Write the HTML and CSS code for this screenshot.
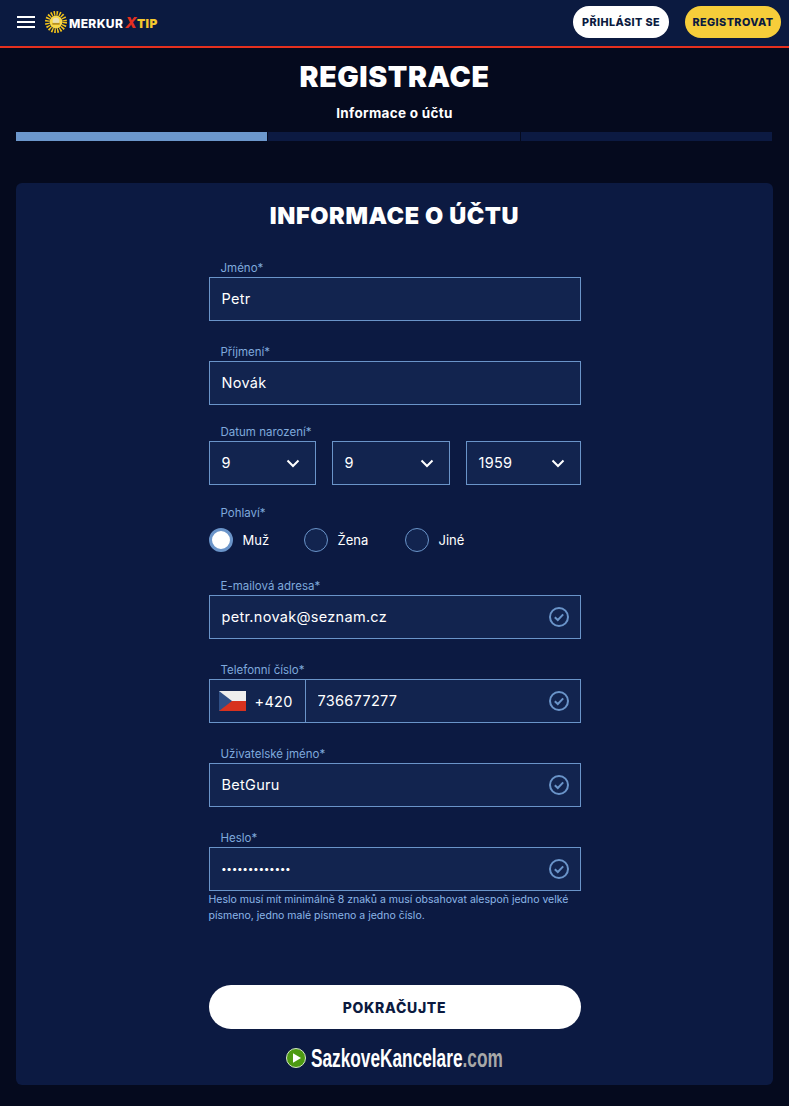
FILE: index.html
```html
<!DOCTYPE html>
<html lang="cs">
<head>
  <meta charset="UTF-8" />
  <meta name="viewport" content="width=device-width, initial-scale=1.0"/>
  <title>Registrace</title>
  <link rel="stylesheet" href="styles.css">
</head>
<body>
  <header class="topbar">
    <div class="burger"><span></span><span></span><span></span></div>
    <svg class="sun" viewBox="0 0 24 24" width="22" height="22">
      <circle cx="12" cy="12" r="9.5" fill="none" stroke="#f5c518" stroke-width="5" stroke-dasharray="1.6 1.4"/>
      <circle cx="12" cy="12" r="7" fill="#f7d84a"/>
      <circle cx="12" cy="11" r="3.6" fill="#e9dfb0"/>
      <rect x="8" y="13" width="8" height="2" fill="#b98f1e"/>
    </svg>
    <div class="brand">MERKUR<em>X</em><b>TIP</b></div>
    <div class="topbar-btns">
      <a class="top-btn white">PŘIHLÁSIT SE</a>
      <a class="top-btn yellow">REGISTROVAT</a>
    </div>
  </header>

  <h1>REGISTRACE</h1>
  <div class="step-name">Informace o účtu</div>
  <div class="progress">
    <div class="seg active"></div>
    <div class="seg"></div>
    <div class="seg"></div>
  </div>

  <main class="card">
    <h2>INFORMACE O ÚČTU</h2>
    <form class="form">
      <div class="group">
        <label>Jméno*</label>
        <div class="field"><input type="text" value="Petr"></div>
      </div>
      <div class="group second">
        <label>Příjmení*</label>
        <div class="field"><input type="text" value="Novák"></div>
      </div>
      <div class="group birth">
        <label>Datum narození*</label>
        <div class="date-row">
          <div class="field select day"><span>9</span><svg class="chevron" viewBox="0 0 14 9" width="14" height="9"><path d="M1.5 1.5 7 7l5.5-5.5" fill="none" stroke="#fff" stroke-width="2"/></svg></div>
          <div class="field select month"><span>9</span><svg class="chevron" viewBox="0 0 14 9" width="14" height="9"><path d="M1.5 1.5 7 7l5.5-5.5" fill="none" stroke="#fff" stroke-width="2"/></svg></div>
          <div class="field select year"><span>1959</span><svg class="chevron" viewBox="0 0 14 9" width="14" height="9"><path d="M1.5 1.5 7 7l5.5-5.5" fill="none" stroke="#fff" stroke-width="2"/></svg></div>
        </div>
      </div>
      <div class="group gender">
        <label>Pohlaví*</label>
        <div class="radio-row">
          <div class="radio-item male"><span class="radio checked"></span>Muž</div>
          <div class="radio-item female"><span class="radio"></span>Žena</div>
          <div class="radio-item"><span class="radio"></span>Jiné</div>
        </div>
      </div>
      <div class="group">
        <label>E-mailová adresa*</label>
        <div class="field"><input type="text" value="petr.novak@seznam.cz">
          <svg class="check" viewBox="0 0 20 20" width="20" height="20"><circle cx="10" cy="10" r="9" fill="none" stroke="#6a94c9" stroke-width="2"/><path d="M5.8 10.2 8.8 13l5.4-5.6" fill="none" stroke="#6a94c9" stroke-width="2"/></svg>
        </div>
      </div>
      <div class="group">
        <label>Telefonní číslo*</label>
        <div class="field phone">
          <div class="prefix">
            <svg class="flag" viewBox="0 0 27 20" width="27" height="20"><rect width="27" height="10" fill="#eeeeee"/><rect y="10" width="27" height="10" fill="#d7321f"/><path d="M0 0 13 10 0 20z" fill="#2f4f85"/></svg>
            <span>+420</span>
          </div>
          <input type="text" value="736677277">
          <svg class="check" viewBox="0 0 20 20" width="20" height="20"><circle cx="10" cy="10" r="9" fill="none" stroke="#6a94c9" stroke-width="2"/><path d="M5.8 10.2 8.8 13l5.4-5.6" fill="none" stroke="#6a94c9" stroke-width="2"/></svg>
        </div>
      </div>
      <div class="group">
        <label>Uživatelské jméno*</label>
        <div class="field"><input type="text" value="BetGuru">
          <svg class="check" viewBox="0 0 20 20" width="20" height="20"><circle cx="10" cy="10" r="9" fill="none" stroke="#6a94c9" stroke-width="2"/><path d="M5.8 10.2 8.8 13l5.4-5.6" fill="none" stroke="#6a94c9" stroke-width="2"/></svg>
        </div>
      </div>
      <div class="group password">
        <label>Heslo*</label>
        <div class="field"><input class="pass" type="text" value="•••••••••••••">
          <svg class="check" viewBox="0 0 20 20" width="20" height="20"><circle cx="10" cy="10" r="9" fill="none" stroke="#6a94c9" stroke-width="2"/><path d="M5.8 10.2 8.8 13l5.4-5.6" fill="none" stroke="#6a94c9" stroke-width="2"/></svg>
        </div>
        <p class="hint">Heslo musí mít minimálně 8 znaků a musí obsahovat alespoň jedno velké písmeno, jedno malé písmeno a jedno číslo.</p>
      </div>
      <button type="button" class="submit">POKRAČUJTE</button>
    </form>
    <div class="watermark">
      <svg viewBox="0 0 20 20" width="20" height="20"><circle cx="10" cy="10" r="9.5" fill="#4d9a12" stroke="#d5e8c4" stroke-width="1"/><path d="M7 5.2 15 10l-8 4.8z" fill="#fff"/></svg>
      <span class="wm-text">SazkoveKancelare<i>.com</i></span>
    </div>
  </main>
</body>
</html>
```

FILE: styles.css
```css
* {
  box-sizing: border-box;
}

body {
  margin: 0;
  background: #050a1e;
  color: #fff;
  font-family: Inter, "Open Sans", sans-serif;
  height: 1106px;
  overflow: hidden;
}

.topbar {
  display: flex;
  align-items: center;
  height: 48px;
  padding: 0 8px 2px 17px;
  background: #0b1a40;
  border-bottom: 2px solid #e5301f;
}

.burger {
  display: flex;
  flex-direction: column;
  gap: 3px;
  width: 18px;
  margin-right: 10px;
}

.burger span {
  height: 2px;
  background: #fff;
}

.sun {
  margin-right: 2px;
}

.brand {
  font-weight: 800;
  font-size: 12px;
  letter-spacing: 0.35px;
}

.brand em {
  color: #e5301f;
  font-size: 15px;
  font-style: italic;
  margin-left: 2px;
}

.brand b {
  color: #f5c82e;
}

.topbar-btns {
  display: flex;
  gap: 16px;
  margin-left: auto;
}

.top-btn {
  display: flex;
  align-items: center;
  justify-content: center;
  height: 32px;
  border-radius: 16px;
  color: #0b1a40;
  font-weight: 800;
  font-size: 10.8px;
  letter-spacing: 0.4px;
}

.top-btn.white {
  width: 96px;
  background: #fff;
}

.top-btn.yellow {
  width: 96px;
  background: #f6cd3a;
}

h1 {
  margin: 13px 0 0;
  text-align: center;
  font-size: 28.5px;
  line-height: 32px;
  font-weight: 900;
  letter-spacing: 0.6px;
}

.step-name {
  margin-top: 12px;
  text-align: center;
  font-size: 13.5px;
  line-height: 16px;
  font-weight: 700;
  letter-spacing: 0.3px;
}

.progress {
  display: flex;
  gap: 1px;
  margin: 11px 17px 0 16px;
}

.seg {
  flex: 1;
  height: 9px;
  background: #0c1a42;
}

.seg.active {
  background: #6c97cc;
}

.card {
  margin: 42px 16px 0;
  height: 902px;
  padding-top: 18px;
  background: #0c1a42;
  border-radius: 6px;
}

h2 {
  margin: 0 0 26px;
  text-align: center;
  font-size: 23.5px;
  line-height: 30px;
  font-weight: 900;
  letter-spacing: 0.6px;
}

.form {
  width: 372px;
  margin: 0 auto;
}

.group {
  margin-bottom: 20px;
}

.group.second {
  margin-bottom: 16px;
}

.group.birth {
  margin-bottom: 17px;
}

.group.gender {
  margin-bottom: 23px;
}

.group.password {
  margin-bottom: 61px;
}

label {
  display: block;
  height: 20px;
  padding-left: 12px;
  color: #7fa9dc;
  font-size: 11.5px;
  line-height: 22px;
}

.field {
  display: flex;
  align-items: center;
  height: 44px;
  padding: 0 11px 0 12px;
  background: #12244f;
  border: 1px solid #6a94c9;
  font-size: 14.5px;
  letter-spacing: 0.3px;
}

.field input {
  flex: 1;
  min-width: 0;
  margin-bottom: 2px;
  padding: 0;
  border: 0;
  outline: 0;
  background: transparent;
  color: #fff;
  font: inherit;
  letter-spacing: inherit;
}

.field input.pass {
  font-size: 10px;
  letter-spacing: 0.6px;
  font-weight: 700;
}

.check {
  flex: none;
  margin-left: 8px;
}

.date-row {
  display: flex;
  gap: 16px;
}

.select {
  justify-content: space-between;
  padding-right: 15px;
}

.select span {
  margin-bottom: 2px;
}

.select.day {
  width: 107px;
}

.select.month {
  width: 118px;
}

.select.year {
  width: 115px;
}

.radio-row {
  display: flex;
  margin-top: 6px;
}

.radio-item {
  display: flex;
  align-items: center;
  gap: 10px;
  font-size: 13px;
  height: 24px;
}

.radio-item.male {
  width: 95px;
}

.radio-item.female {
  width: 101px;
}

.radio {
  width: 24px;
  height: 24px;
  border: 1px solid #6a94c9;
  border-radius: 50%;
  background: #12244f;
}

.radio.checked {
  border: 3px solid #6a94c9;
  background: #fff;
}

.phone {
  padding-left: 0;
}

.prefix {
  display: flex;
  align-items: center;
  gap: 9px;
  align-self: stretch;
  width: 96px;
  flex: none;
  margin-right: 12px;
  padding-left: 9px;
  border-right: 1px solid #6a94c9;
}

.hint {
  margin: 1px 0 0;
  color: #8db7e8;
  font-size: 10.5px;
  line-height: 16px;
}

.submit {
  display: block;
  width: 100%;
  height: 44px;
  border: 0;
  border-radius: 22px;
  background: #fff;
  color: #0b1a40;
  font-family: inherit;
  font-weight: 800;
  font-size: 14px;
  letter-spacing: 0.7px;
}

.watermark {
  display: flex;
  align-items: center;
  justify-content: center;
  gap: 5px;
  margin-top: 17px;
  font-family: "Liberation Sans", sans-serif;
  font-weight: 700;
  font-size: 25px;
  line-height: 24px;
}

/* no narrow face installed, so the logo text gets squeezed */
.wm-text {
  width: 192px;
  white-space: nowrap;
  transform: scaleX(0.69);
  transform-origin: left center;
}

.watermark i {
  font-style: normal;
  color: #a8a8a8;
}
```
